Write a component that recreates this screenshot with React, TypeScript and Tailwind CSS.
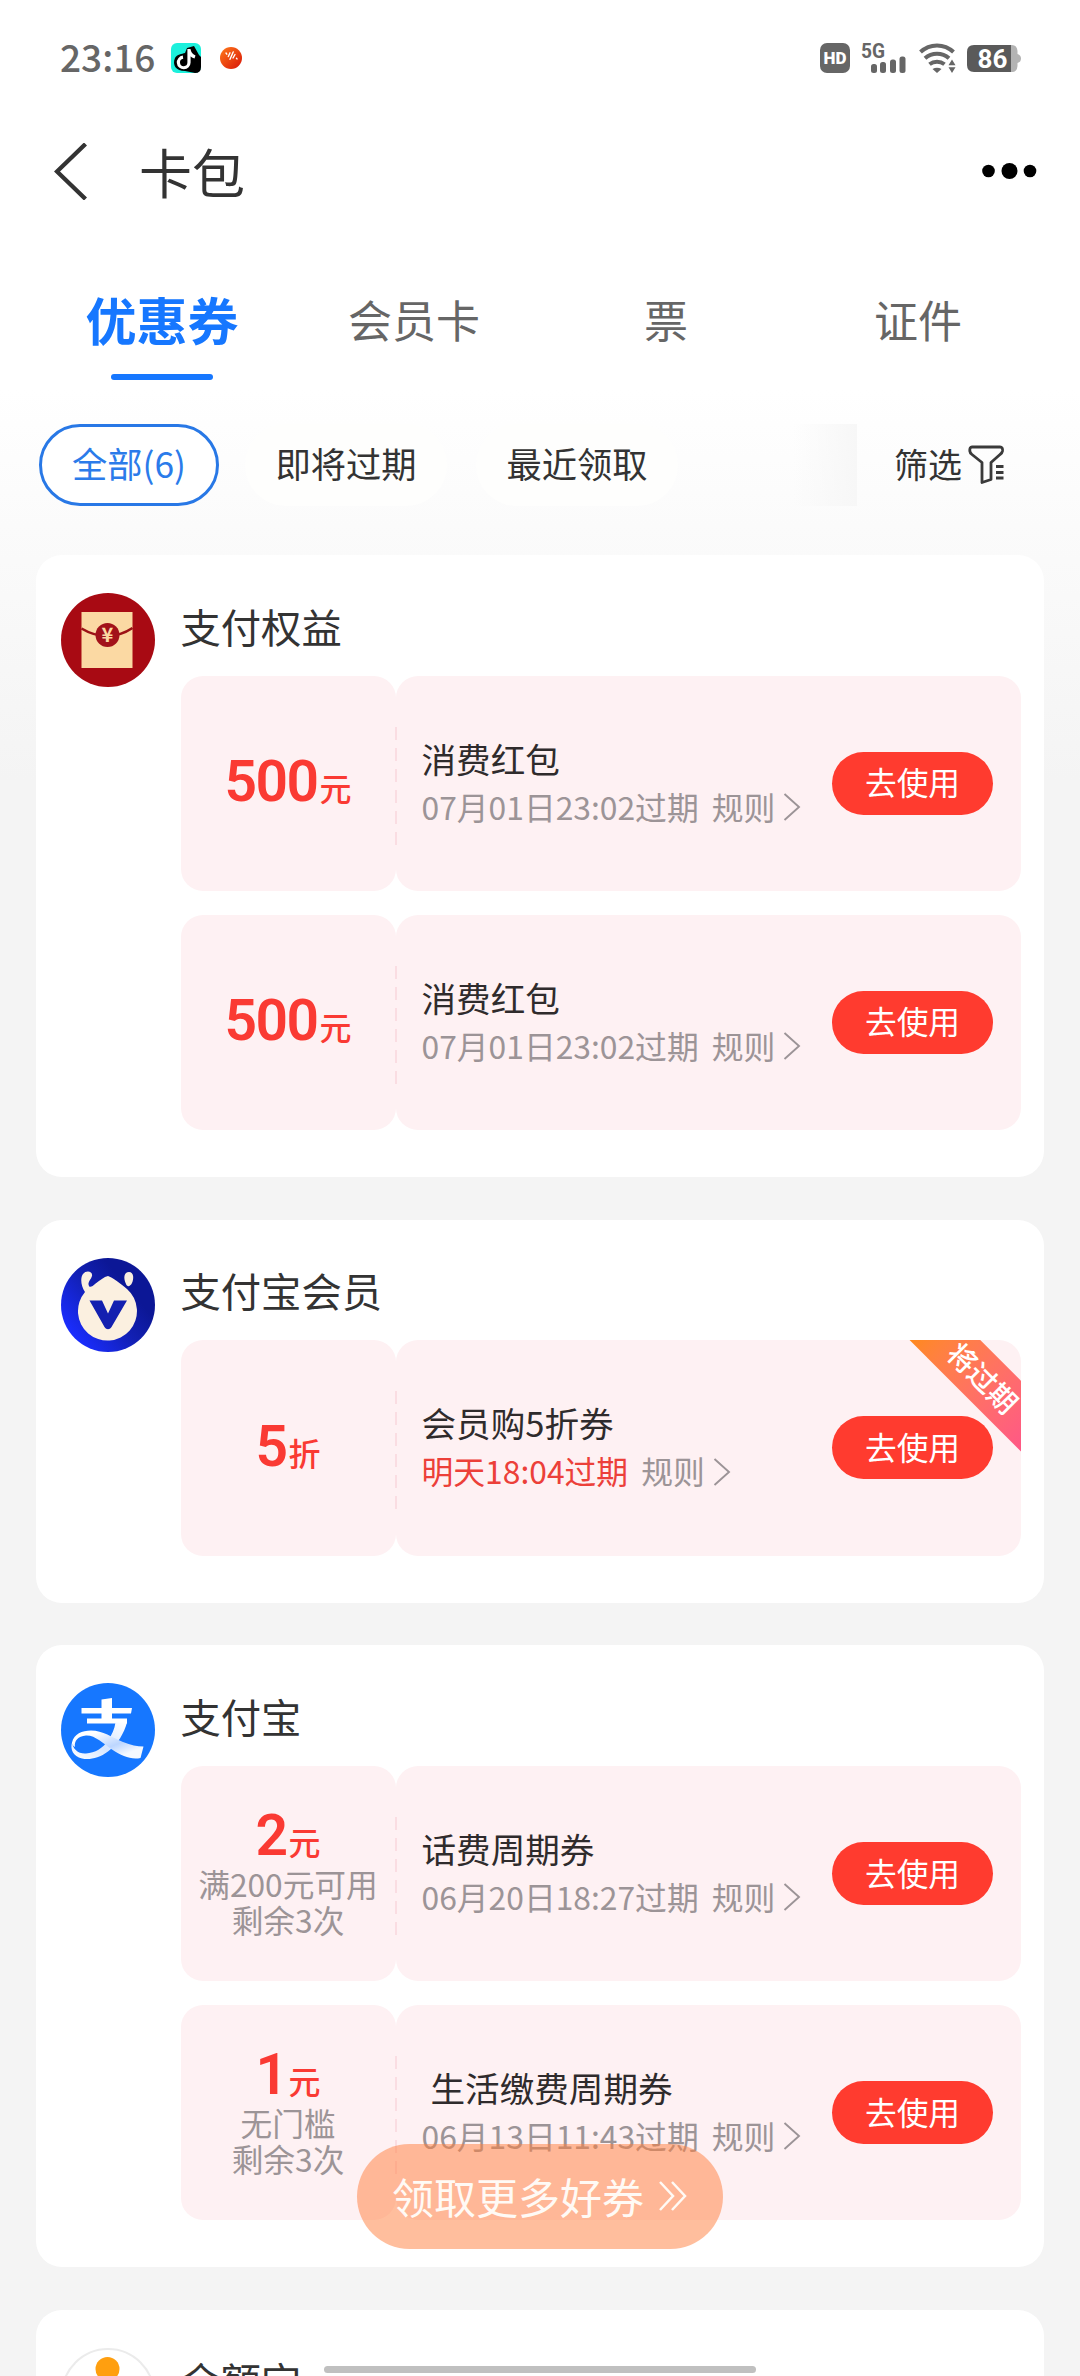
import React from 'react';

interface Coupon {
    amount: string;
    unit: string;
    notes?: string[];
    title: string;
    indent?: boolean;
    expire: string;
    urgent?: boolean;
}

interface Shop {
    name: string;
    icon: React.ReactNode;
    coupons: Coupon[];
}

const EnvelopeIcon = () => (
    <svg viewBox="0 0 94 94" className="w-full h-full">
        <circle cx="47" cy="47" r="47" fill="#a80a13" />
        <rect x="20.5" y="19" width="51" height="56" fill="#fbd9a3" />
        <path d="M20.5 35.5C28 40 36 43 46 43s18-3 25.500-8" fill="none" stroke="#9c1216" strokeWidth="2.600" />
        <circle cx="46.500" cy="42" r="12" fill="#a2121a" />
        <text x="46.500" y="49" textAnchor="middle" fontSize="20" fontWeight="700" fill="#fbd9a3" className="font-['Noto_Sans_CJK_SC',sans-serif]">¥</text>
    </svg>
);

const MemberIcon = () => (
    <svg viewBox="0 0 94 94" className="w-full h-full">
        <defs>
            <linearGradient id="member" x1="0.1" y1="0.8" x2="0.7" y2="0.3">
                <stop offset="0" stopColor="#1a2dff" />
                <stop offset="0.6" stopColor="#1220b4" />
                <stop offset="1" stopColor="#0c1796" />
            </linearGradient>
        </defs>
        <circle cx="47" cy="47" r="47" fill="url(#member)" />
        <path d="M47 18C51 19 60 26 66 31A29.500 29.500 0 1 1 24 34C20 28 19 20 22 16C25 12 32 13 31 18C30 22 26 24 28 28C29 30 32 28 34 26C39 22 43 19 47 18Z" fill="#fbf0e0" />
        <path d="M65 26C62 20 63 14 68 14C73 14 73 21 71 25C69 29 66 29 65 26Z" fill="#fbf0e0" />
        <path d="M28.500 42.500H41L47 55.500L53 42.500H66L50.500 69C48.500 72 45.500 72 43.500 69Z" fill="#1320b0" />
    </svg>
);

const AlipayIcon = () => (
    <svg viewBox="0 0 94 94" className="w-full h-full">
        <defs>
            <linearGradient id="tail" x1="0.4" y1="0" x2="1" y2="0.6">
                <stop offset="0" stopColor="#ffffff" />
                <stop offset="0.6" stopColor="#bcd6ff" />
                <stop offset="1" stopColor="#f4f9ff" />
            </linearGradient>
            <linearGradient id="stroke" x1="1" y1="0" x2="0" y2="1">
                <stop offset="0" stopColor="#ffffff" />
                <stop offset="0.55" stopColor="#d6e6ff" />
                <stop offset="1" stopColor="#ffffff" />
            </linearGradient>
        </defs>
        <circle cx="47" cy="47" r="47" fill="#1677ff" />
        <path d="M40.500 16.500L51 15V25H71L70 30.500H51V35.500H66V40.500H26V35.500H40.500V30.500H20.500V25H40.500Z" fill="#fff" />
        <path d="M54.500 39.500H66C63 50 57 61 47 68.500C38 75.500 28 77 21 75.500C12 73.500 9 66 11 59.500C12 66 17 71 25 70.500C34 70 42 65 47 57.500C51 51.500 53.500 46 54.500 39.500Z" fill="url(#stroke)" />
        <path d="M11 59.500C13 51 21 47.500 30 47.500C42 47.500 51 54.500 62 59C70 62 76 63.500 82.500 63.500L79.500 75C70 77 61 73 51 66.500C42 60.500 34 52 25 52.500C17 53 13 58 14 64C12 63 10.500 61 11 59.500Z" fill="url(#tail)" />
    </svg>
);

const YuebaoIcon = () => (
    <svg viewBox="0 0 94 94" className="w-full h-full">
        <circle cx="47" cy="47" r="46" fill="#fff" stroke="#ebebeb" strokeWidth="2" />
        <circle cx="46.500" cy="21" r="12" fill="#ff9f0f" />
        <path d="M24 60C26 44 36 36 46.500 36S67 44 69 60Z" fill="#ff9f0f" />
        <circle cx="69" cy="31" r="2" fill="#ffb08a" />
    </svg>
);

const shops: Shop[] = [
    {
        name: '支付权益',
        icon: <EnvelopeIcon />,
        coupons: [
            { amount: '500', unit: '元', title: '消费红包', expire: '07月01日23:02过期' },
            { amount: '500', unit: '元', title: '消费红包', expire: '07月01日23:02过期' },
        ],
    },
    {
        name: '支付宝会员',
        icon: <MemberIcon />,
        coupons: [{ amount: '5', unit: '折', title: '会员购5折券', expire: '明天18:04过期', urgent: true }],
    },
    {
        name: '支付宝',
        icon: <AlipayIcon />,
        coupons: [
            { amount: '2', unit: '元', notes: ['满200元可用', '剩余3次'], title: '话费周期券', expire: '06月20日18:27过期' },
            { amount: '1', unit: '元', notes: ['无门槛', '剩余3次'], title: '生活缴费周期券', indent: true, expire: '06月13日11:43过期' },
        ],
    },
    { name: '余额宝', icon: <YuebaoIcon />, coupons: [] },
];

const tabs = ['优惠券', '会员卡', '票', '证件'];

const StatusBar = () => (
    <div className="h-[116px] flex items-center pl-[60px] pr-[59px] text-[#666]">
        <span className="w-[111px] pb-[3px] text-[37px] leading-none font-medium font-['Noto_Sans_CJK_SC',sans-serif]">23:16</span>
        <svg viewBox="0 0 30 30" className="w-[30px] h-[30px]">
            <rect width="30" height="30" rx="6" fill="#1cf0dc" />
            <path d="M16 5L23 3L28 12L30 14V24Q30 30 24 30L14 28C5 28 1 22 4 15C6 11 11 11 14 10Z" fill="#000" />
            <path d="M18 6V19.500A5.300 5.300 0 1 1 12 14.200M18 7C19 11 21 13 24 14" fill="none" stroke="#fff" strokeWidth="3.200" />
        </svg>
        <svg viewBox="0 0 22 22" className="w-[22px] h-[22px] ml-[19px]">
            <defs>
                <linearGradient id="orb" x1="0" y1="0" x2="1" y2="1">
                    <stop offset="0" stopColor="#ff7a1a" />
                    <stop offset="1" stopColor="#d81408" />
                </linearGradient>
            </defs>
            <circle cx="11" cy="11" r="11" fill="url(#orb)" />
            <path d="M6 6l.8 1.200M8.300 9.500L10 5.800M10 12.300L13.200 5M13 11l2-3.500M16.500 11.300l.5.600" stroke="#fff" strokeWidth="1.400" strokeLinecap="round" />
        </svg>
        <div className="ml-auto flex items-center">
            <div className="w-[30px] h-[30px] rounded-[7px] bg-[#666] text-white flex items-center justify-center text-[17px] leading-[24px] font-black font-['Roboto',sans-serif]">
                HD
            </div>
            <svg viewBox="0 0 46 30" className="w-[46px] h-[30px] ml-[11px] overflow-visible" fill="#666">
                <text x="0" y="14.800" fontSize="20" fontWeight="700" textLength="24" lengthAdjust="spacingAndGlyphs" className="font-['Roboto',sans-serif]">5G</text>
                <rect x="10" y="21" width="6" height="9" rx="2.500" />
                <rect x="19" y="19" width="6" height="11" rx="2.500" />
                <rect x="29" y="16.500" width="6" height="13.500" rx="2.500" />
                <rect x="38.500" y="13.500" width="6" height="16.500" rx="2.500" />
            </svg>
            <svg viewBox="0 0 37 30" className="w-[37px] h-[30px] ml-[12px]">
                <path d="M1.500 9A24 24 0 0 1 34.500 9M6 15.300A18 18 0 0 1 30 15.300M10.500 21.300A12 12 0 0 1 25.500 21.300" fill="none" stroke="#666" strokeWidth="4" />
                <path d="M18 30L13.500 26Q18 23.500 22.500 26Z" fill="#666" />
                <path d="M33 14L38 23L33 32L28 23Z" fill="#fff" />
                <path d="M33 16.500L36.500 22.300H29.500ZM33 30L36.500 24.300H29.500Z" fill="#666" />
            </svg>
            <svg viewBox="0 0 54 27" className="w-[54px] h-[27px] ml-[11px] overflow-visible">
                <path d="M44 0H45Q50 0 50.500 6V9Q54 10 54 13.500T50.500 18V21Q50 27 45 27H44Z" fill="#b3b3b3" />
                <path d="M7 0H44V27H7Q0 27 0 20V7Q0 0 7 0Z" fill="#5a5a5a" />
                <text x="25.500" y="23" textAnchor="middle" fontSize="26" fontWeight="700" fill="#fff" className="font-['Roboto',sans-serif]">86</text>
            </svg>
        </div>
    </div>
);

const NavBar = () => (
    <div className="h-[112px] flex items-center pl-[54px] pr-[43px] pb-[2px]">
        <svg viewBox="0 0 34 57" className="w-[34px] h-[57px]">
            <path d="M31.500 1L3 28.500L31.500 56" fill="none" stroke="#333" strokeWidth="4.300" />
        </svg>
        <h1 className="ml-[51px] text-[53px] leading-[60px] text-[#333]">卡包</h1>
        <svg viewBox="0 0 55 18" className="ml-auto w-[55px] h-[18px]">
            <circle cx="6.500" cy="9" r="6.300" />
            <circle cx="27.500" cy="9" r="8" />
            <circle cx="48" cy="9" r="6.300" />
        </svg>
    </div>
);

const Tabs = () => (
    <div className="h-[158px] px-9 grid grid-cols-4">
        {tabs.map((tab, i) => (
            <div key={tab} className="flex flex-col items-center pt-[58px]">
                <span
                    className={
                        i === 0
                            ? 'h-[66px] leading-[66px] text-[51px] font-bold text-[#1677ff]'
                            : 'h-[66px] leading-[66px] text-[44px] text-[#666]'
                    }
                >
                    {tab}
                </span>
                {i === 0 && <span className="mt-[22px] w-[102px] h-[6px] rounded-[3px] bg-[#1677ff]" />}
            </div>
        ))}
    </div>
);

const Filters = () => (
    <div className="mt-[38px] h-[82px] pl-[39px] flex items-center text-[35.300px] leading-none text-[#333]">
        <div className="w-[180px] h-full pb-[4px] rounded-full border-[3px] border-[#2878e6] bg-white text-[#2b7bea] flex items-center justify-center">
            全部(6)
        </div>
        <div className="ml-[26px] w-[202px] h-full pb-[4px] rounded-full bg-[#fefefd] flex items-center justify-center">即将过期</div>
        <div className="ml-[29px] w-[202px] h-full pb-[4px] rounded-full bg-[#fefefd] flex items-center justify-center">最近领取</div>
        <div className="ml-[115px] w-[64px] h-full bg-linear-to-r from-transparent to-[#f7f7f7]" />
        <span className="ml-[37px] pb-[2px] text-[34px]">筛选</span>
        <svg viewBox="0 0 37 40" className="w-[37px] h-[40px] ml-[6px]" fill="none" stroke="#3a3a3a" strokeWidth="2.800" strokeLinejoin="round">
            <path d="M4 2H32Q35 2 34.500 6Q34.200 8 32 9.500L23 17.500V34.500L14 37.500V17.500L4 9.500Q2 8 1.800 6Q1.500 2 4 2Z" />
            <path d="M28 21.500h7.500M28 27.500h7.500M28 33h7.500" />
        </svg>
    </div>
);

const CouponRow: React.FC<{ coupon: Coupon }> = ({ coupon }) => (
    <div className="relative h-[215.500px] flex">
        <div className="w-[215px] rounded-[22px] bg-[#fef1f3] flex flex-col items-center justify-center text-[#9c9497]">
            <div className="flex items-baseline pt-[3px] text-[#fa3a33]">
                <span className="text-[57px] leading-[48px] font-semibold tracking-[-1.500px] font-['Roboto',sans-serif]">{coupon.amount}</span>
                <span className="ml-[2px] text-[32px] leading-[48px] font-medium">{coupon.unit}</span>
            </div>
            {coupon.notes?.map((note) => (
                <span key={note} className="text-[31.700px] leading-[36px] whitespace-nowrap">
                    {note}
                </span>
            ))}
        </div>
        {/* Tear line */}
        <svg viewBox="0 0 2 118" className="absolute left-[214px] top-[51px] w-[2px] h-[118px]">
            <path d="M1 0V118" stroke="#fadde2" strokeWidth="2" strokeDasharray="13 8" />
        </svg>
        <div className="flex-1 rounded-[22px] bg-[#fef1f3] flex items-center pl-[26px] pr-[28px]">
            <div className="flex-1 pb-[3px]">
                <div className={coupon.indent ? 'pl-[9px] text-[34.600px] leading-[48px] text-[#2f2b2c]' : 'text-[34.600px] leading-[48px] text-[#2f2b2c]'}>
                    {coupon.title}
                </div>
                <div className="flex items-center text-[31.800px] leading-[48px] text-[#9c9497] whitespace-nowrap">
                    <span className={coupon.urgent ? 'text-[#ec4039]' : ''}>{coupon.expire}</span>
                    <span className="ml-[13px]">规则</span>
                    <svg viewBox="0 0 18 28" className="w-[18px] h-[28px] ml-[8px] mt-[3px]">
                        <path d="M1.500 1L16 14L1.500 27" fill="none" stroke="#9c9497" strokeWidth="1.900" />
                    </svg>
                </div>
            </div>
            <button className="w-[161px] h-[63px] pb-[2px] rounded-full bg-[#ff3b2f] text-white text-[31.700px] leading-none">去使用</button>
        </div>
        {coupon.urgent && (
            <div className="absolute top-0 right-0 w-[130px] h-[130px] overflow-hidden">
                <div className="absolute left-[8.500px] top-[12.500px] w-[166px] h-[49.500px] rotate-45 bg-linear-to-r from-[#ff8a0c] to-[#ff5588] text-white text-[28.500px] leading-[47px] font-medium text-center">
                    将过期
                </div>
            </div>
        )}
    </div>
);

const ShopCard: React.FC<{ shop: Shop }> = ({ shop }) => (
    <section className="rounded-[26px] bg-white flex pl-[25px] pr-[23px] pb-[47px]">
        <div className="mt-[38px] w-[94px] h-[94px] shrink-0">{shop.icon}</div>
        <div className="ml-[25.500px] flex-1 pt-[42.500px]">
            <h2 className="text-[40.300px] leading-[56px] text-[#333]">{shop.name}</h2>
            <div className="mt-[22px] flex flex-col gap-[23.500px]">
                {shop.coupons.map((coupon, i) => (
                    <CouponRow key={i} coupon={coupon} />
                ))}
            </div>
        </div>
    </section>
);

export default function App() {
    return (
        <div className="relative w-[1080px] h-[2376px] overflow-hidden bg-[#f4f4f4] font-['Noto_Sans_CJK_SC',sans-serif]">
            <div className="bg-[linear-gradient(#fff_0px,#fff_390px,#fafafa_560px,#f4f4f4_780px)]">
                <StatusBar />
                <NavBar />
                <Tabs />
                <Filters />
                <main className="mt-[49px] px-9 flex flex-col gap-[42.600px]">
                    {shops.map((shop) => (
                        <ShopCard key={shop.name} shop={shop} />
                    ))}
                </main>
            </div>

            {/* Floating entry */}
            <button className="absolute left-[357px] top-[2144px] w-[366px] h-[105px] pb-[2px] rounded-full bg-[#ff7d3b]/50 text-[#fffaf5] flex items-center justify-center text-[42px] leading-none whitespace-nowrap">
                领取更多好券
                <svg viewBox="0 0 30 30" className="w-[30px] h-[30px] ml-[14px]" fill="none" stroke="#fffaf5" strokeWidth="2.500">
                    <path d="M2 1L15 15L2 29M14 1L27 15L14 29" />
                </svg>
            </button>

            {/* Home indicator */}
            <div className="absolute left-[324px] top-[2366px] w-[432px] h-[7px] rounded-full bg-[#c0c0c0]" />
        </div>
    );
}
